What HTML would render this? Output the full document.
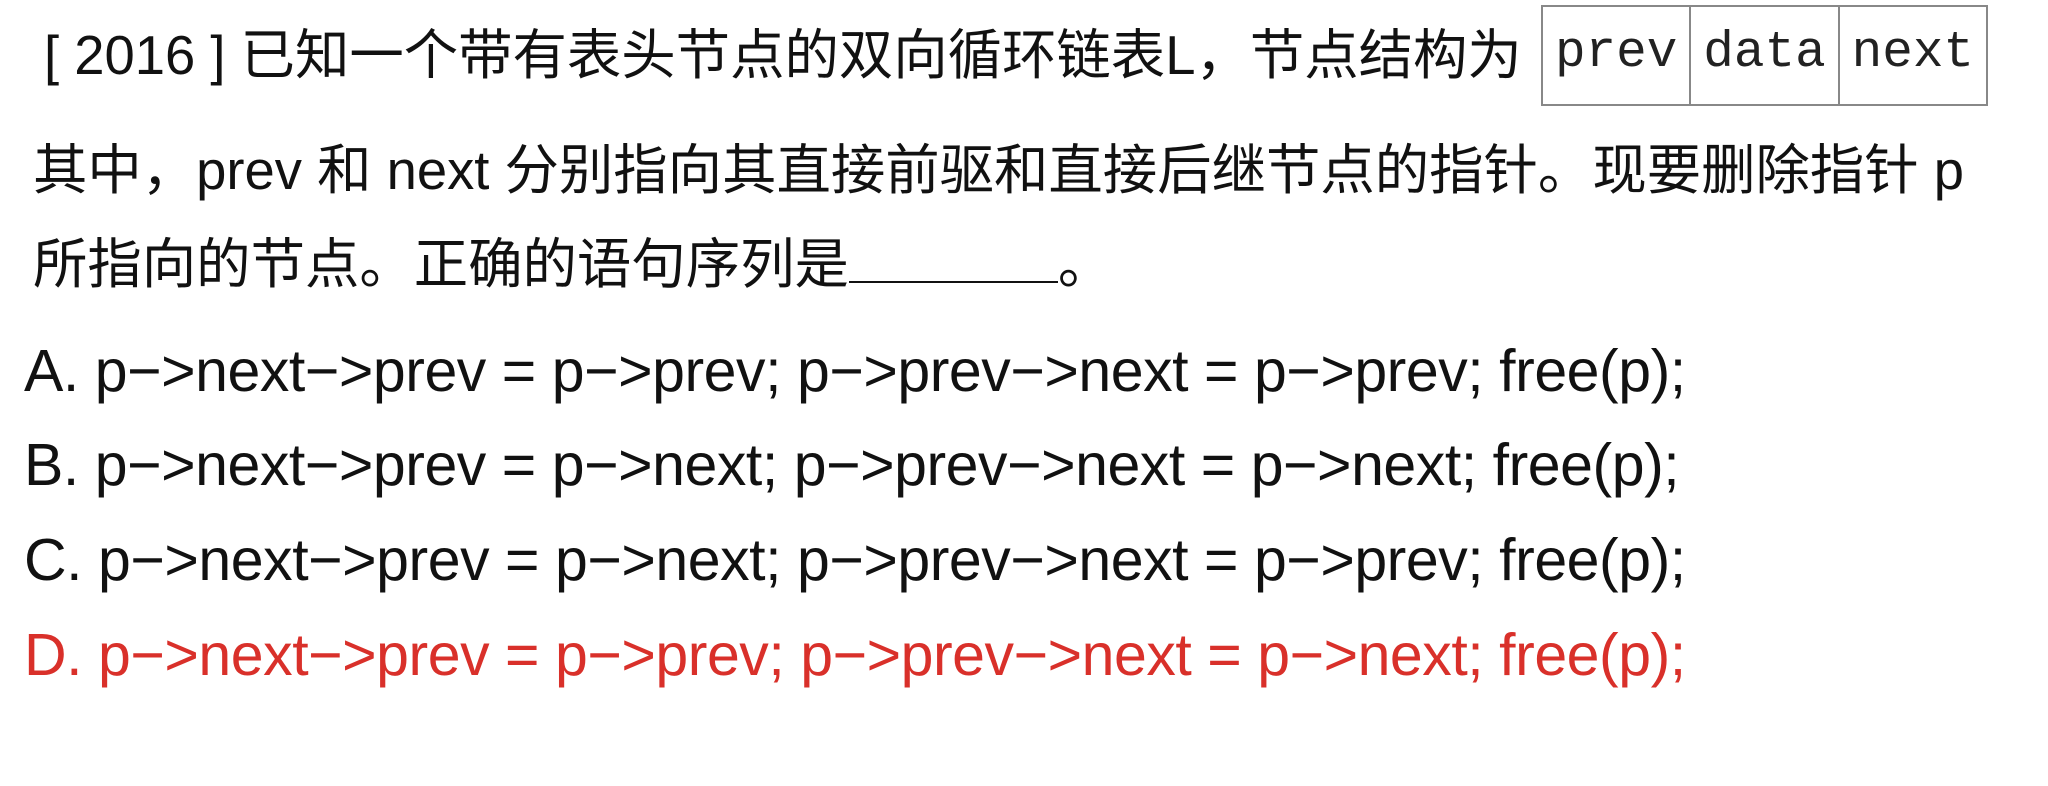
<!DOCTYPE html>
<html><head><meta charset="utf-8"><style>
body{margin:0;width:2048px;height:786px;background:#fff;overflow:hidden;position:relative;font-family:"Liberation Sans","Noto Sans CJK SC",sans-serif;color:#111}
.l{position:absolute;white-space:nowrap;line-height:1}
.t{font-size:54.4px}
.o{font-size:59px;letter-spacing:-0.45px;left:24px}
.box{position:absolute;left:1541px;top:5px;width:447px;height:101px;border:2px solid #888;box-sizing:border-box;display:flex}
.box div{flex:1;border-right:2px solid #888;font-family:"Liberation Mono",monospace;font-size:51px;display:flex;align-items:center;justify-content:center;color:#222;padding-bottom:4px}
.box div:last-child{border-right:none}
.u{display:inline-block;width:209px;border-bottom:2px solid #111;height:48px;vertical-align:baseline}
</style></head><body>
<div class="l t" style="left:44px;top:29px">[ 2016 ] 已知一个带有表头节点的双向循环链表L，节点结构为</div>
<div class="box"><div>prev</div><div>data</div><div>next</div></div>
<div class="l t" style="left:33px;top:144px">其中，prev 和 next 分别指向其直接前驱和直接后继节点的指针。现要删除指针 p</div>
<div class="l t" style="left:33px;top:233px">所指向的节点。正确的语句序列是<span class="u"></span>。</div>
<div class="l o" style="top:342px">A. p−&gt;next−&gt;prev = p−&gt;prev; p−&gt;prev−&gt;next = p−&gt;prev; free(p);</div>
<div class="l o" style="top:436px">B. p−&gt;next−&gt;prev = p−&gt;next; p−&gt;prev−&gt;next = p−&gt;next; free(p);</div>
<div class="l o" style="top:531px">C. p−&gt;next−&gt;prev = p−&gt;next; p−&gt;prev−&gt;next = p−&gt;prev; free(p);</div>
<div class="l o" style="top:626px;color:#d9302a">D. p−&gt;next−&gt;prev = p−&gt;prev; p−&gt;prev−&gt;next = p−&gt;next; free(p);</div>
</body></html>
